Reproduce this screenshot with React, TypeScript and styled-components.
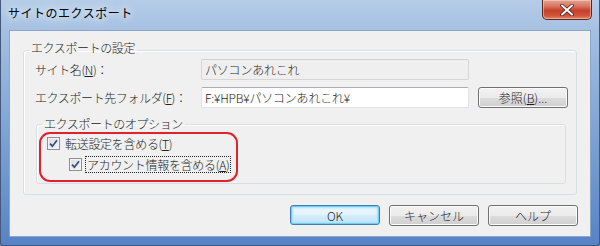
import React from "react";
import styled, { createGlobalStyle } from "styled-components";

const Global = createGlobalStyle`
  html, body { margin: 0; padding: 0; background: #6f8fb8; }
  body { font-family: "Noto Sans CJK JP", "Noto Sans", sans-serif; }
`;

const Window = styled.div`
  box-sizing: border-box;
  width: 600px;
  height: 246px;
  display: flex;
  flex-direction: column;
  padding: 0 8px 8px 8px;
  background: linear-gradient(180deg, #b5cce7 0%, #a3bfe1 14%, #86a9d8 45%, #6c95cf 75%, #5683c6 100%);
  border: 1px solid #44597a;
  border-top: none;
  border-radius: 0 0 3px 3px;
  overflow: hidden;
`;

const TitleBar = styled.div`
  height: 30px;
  display: flex;
  align-items: flex-start;
  flex-shrink: 0;
`;

const Title = styled.div`
  margin-top: 5px;
  margin-left: -1px;
  font-size: 12px;
  line-height: 16px;
  color: #000;
  letter-spacing: 0.5px;
  text-shadow: 0 0 6px #e6f0fb, 0 0 10px #e6f0fb, 0 0 14px #dce9f8;
`;

const CloseButton = styled.div`
  margin-left: auto;
  margin-right: -1px;
  width: 50px;
  height: 20px;
  box-sizing: border-box;
  border: 1px solid #5a2620;
  border-top: none;
  border-radius: 0 0 5px 5px;
  background: linear-gradient(180deg, #e3a594 0%, #d7705c 35%, #c7402b 55%, #d05236 80%, #e0806a 100%);
  box-shadow: inset 0 0 0 1px rgba(255, 220, 210, 0.5);
  display: flex;
  align-items: center;
  justify-content: center;
`;

const Client = styled.div`
  flex: 1;
  box-sizing: border-box;
  background: #f0f0f0;
  border: 1px solid #8ba6cc;
  padding: 0 12px 0 13px;
  display: flex;
  flex-direction: column;
`;

const Group = styled.fieldset`
  margin: 10px 1px 0 0;
  padding: 0 10px 10px 11px;
  border: 1px solid #d5dfe5;
  border-radius: 3px;
  box-shadow: inset 1px 1px 0 #fff;
  min-width: 0;
`;

const Legend = styled.legend<{ $shift: number; $pb: number }>`
  font-size: 12px;
  line-height: 14px;
  font-weight: 300;
  letter-spacing: -0.4px;
  color: #1e1e1e;
  padding: 0 2px ${(p) => p.$pb}px;
  margin-left: ${(p) => p.$shift}px;
`;

const Form = styled.div`
  display: grid;
  grid-template-columns: 157px 268px 90px;
  grid-template-rows: 21px 21px;
  column-gap: 9px;
  row-gap: 7px;
  align-items: center;
`;

const Label = styled.div`
  font-size: 12px;
  line-height: 16px;
  font-weight: 300;
  letter-spacing: -0.4px;
  color: #1e1e1e;
  white-space: nowrap;
`;

const Field = styled.div<{ $readonly?: boolean }>`
  box-sizing: border-box;
  height: 100%;
  display: flex;
  align-items: center;
  padding-left: 3px;
  font-size: 12px;
  font-weight: 300;
  letter-spacing: -0.2px;
  color: #1e1e1e;
  white-space: nowrap;
  border: 1px solid ${(p) => (p.$readonly ? "#d6d6d6" : "#e0e4ea")};
  border-top-color: ${(p) => (p.$readonly ? "#cfcfcf" : "#abadb3")};
  border-radius: 2px;
  background: ${(p) => (p.$readonly ? "#efefef" : "#ffffff")};
`;

const Button = styled.div<{ $default?: boolean }>`
  box-sizing: border-box;
  width: 90px;
  height: ${(p) => (p.$default ? "20px" : "21px")};
  display: flex;
  align-items: center;
  justify-content: center;
  font-size: 12px;
  font-weight: 300;
  color: #1e1e1e;
  border: 1px solid ${(p) => (p.$default ? "#3c7fb1" : "#707070")};
  border-radius: 3px;
  background: ${(p) =>
    p.$default
      ? "linear-gradient(180deg, #eaf6fd 0%, #e3f3fc 50%, #d4edfb 51%, #c4e5f8 100%)"
      : "linear-gradient(180deg, #f2f2f2 0%, #ebebeb 50%, #dddddd 51%, #cfcfcf 100%)"};
  box-shadow: ${(p) =>
    p.$default ? "inset 0 0 0 1px #74cbf4, inset 0 0 2px 2px #a9e0f8" : "inset 0 0 0 1px #fbfbfb"};
`;

const OptionGroup = styled.fieldset`
  margin: 9px 0 0 1px;
  padding: 1px 10px 1px 10px;
  border: 1px solid #d5dfe5;
  border-radius: 3px;
  box-shadow: inset 1px 1px 0 #fff;
  min-width: 0;
`;

const Highlight = styled.div`
  box-sizing: border-box;
  width: fit-content;
  margin-left: -8px;
  padding: 1px 5px 7px 6px;
  border: 2px solid #e0222c;
  border-radius: 11px;
  display: flex;
  flex-direction: column;
  gap: 4px;
`;

const CheckRow = styled.div<{ $indent: number }>`
  display: flex;
  align-items: center;
  height: 17px;
  gap: 3px;
  padding-left: ${(p) => p.$indent}px;
`;

const Box = styled.div`
  box-sizing: border-box;
  width: 13px;
  height: 13px;
  border: 1px solid #8f8f8f;
  background: linear-gradient(135deg, #dcdcdc 0%, #f5f5f5 100%);
  box-shadow: inset 0 0 0 1px #f4f4f4;
  display: flex;
  align-items: center;
  justify-content: center;
`;

const CheckLabel = styled.span<{ $focus?: boolean }>`
  font-size: 12px;
  line-height: 15px;
  font-weight: 300;
  letter-spacing: -0.3px;
  color: #1e1e1e;
  white-space: nowrap;
  padding: 0 1px;
  border: 1px dotted ${(p) => (p.$focus ? "#222" : "transparent")};
`;

const ButtonRow = styled.div`
  margin-top: 10px;
  display: flex;
  justify-content: flex-end;
  gap: 9px;
`;

const U = styled.span`
  text-decoration: underline;
  text-underline-offset: 1px;
`;

const Check = () => (
  <Box>
    <svg width="9" height="9" viewBox="0 0 9 9">
      <path d="M1 4.6 L3.4 7.2 L8 1.2" fill="none" stroke="#2b4d8f" strokeWidth="1.7" />
    </svg>
  </Box>
);

export default function App() {
  return (
    <>
      <Global />
      <Window>
        <TitleBar>
          <Title>サイトのエクスポート</Title>
          <CloseButton>
            <svg width="14" height="12" viewBox="0 0 14 12">
              <path d="M2 1.5 L12 10.5 M12 1.5 L2 10.5" stroke="#4a2018" strokeWidth="3.6" strokeLinecap="round" />
              <path d="M2 1.5 L12 10.5 M12 1.5 L2 10.5" stroke="#ffffff" strokeWidth="2" strokeLinecap="round" />
            </svg>
          </CloseButton>
        </TitleBar>
        <Client>
          <Group>
            <Legend $shift={-6} $pb={4}>エクスポートの設定</Legend>
            <Form>
              <Label>
                サイト名(<U>N</U>)：
              </Label>
              <Field $readonly>パソコンあれこれ</Field>
              <div />
              <Label>
                エクスポート先フォルダ(<U>F</U>)：
              </Label>
              <Field>F:¥HPB¥パソコンあれこれ¥</Field>
              <Button>
                参照(<U>B</U>)...
              </Button>
            </Form>
            <OptionGroup>
              <Legend $shift={-5} $pb={0}>エクスポートのオプション</Legend>
              <Highlight>
                <CheckRow $indent={0}>
                  <Check />
                  <CheckLabel>
                    転送設定を含める(<U>T</U>)
                  </CheckLabel>
                </CheckRow>
                <CheckRow $indent={22}>
                  <Check />
                  <CheckLabel $focus>
                    アカウント情報を含める(<U>A</U>)
                  </CheckLabel>
                </CheckRow>
              </Highlight>
            </OptionGroup>
          </Group>
          <ButtonRow>
            <Button $default>OK</Button>
            <Button>キャンセル</Button>
            <Button>ヘルプ</Button>
          </ButtonRow>
        </Client>
      </Window>
    </>
  );
}
